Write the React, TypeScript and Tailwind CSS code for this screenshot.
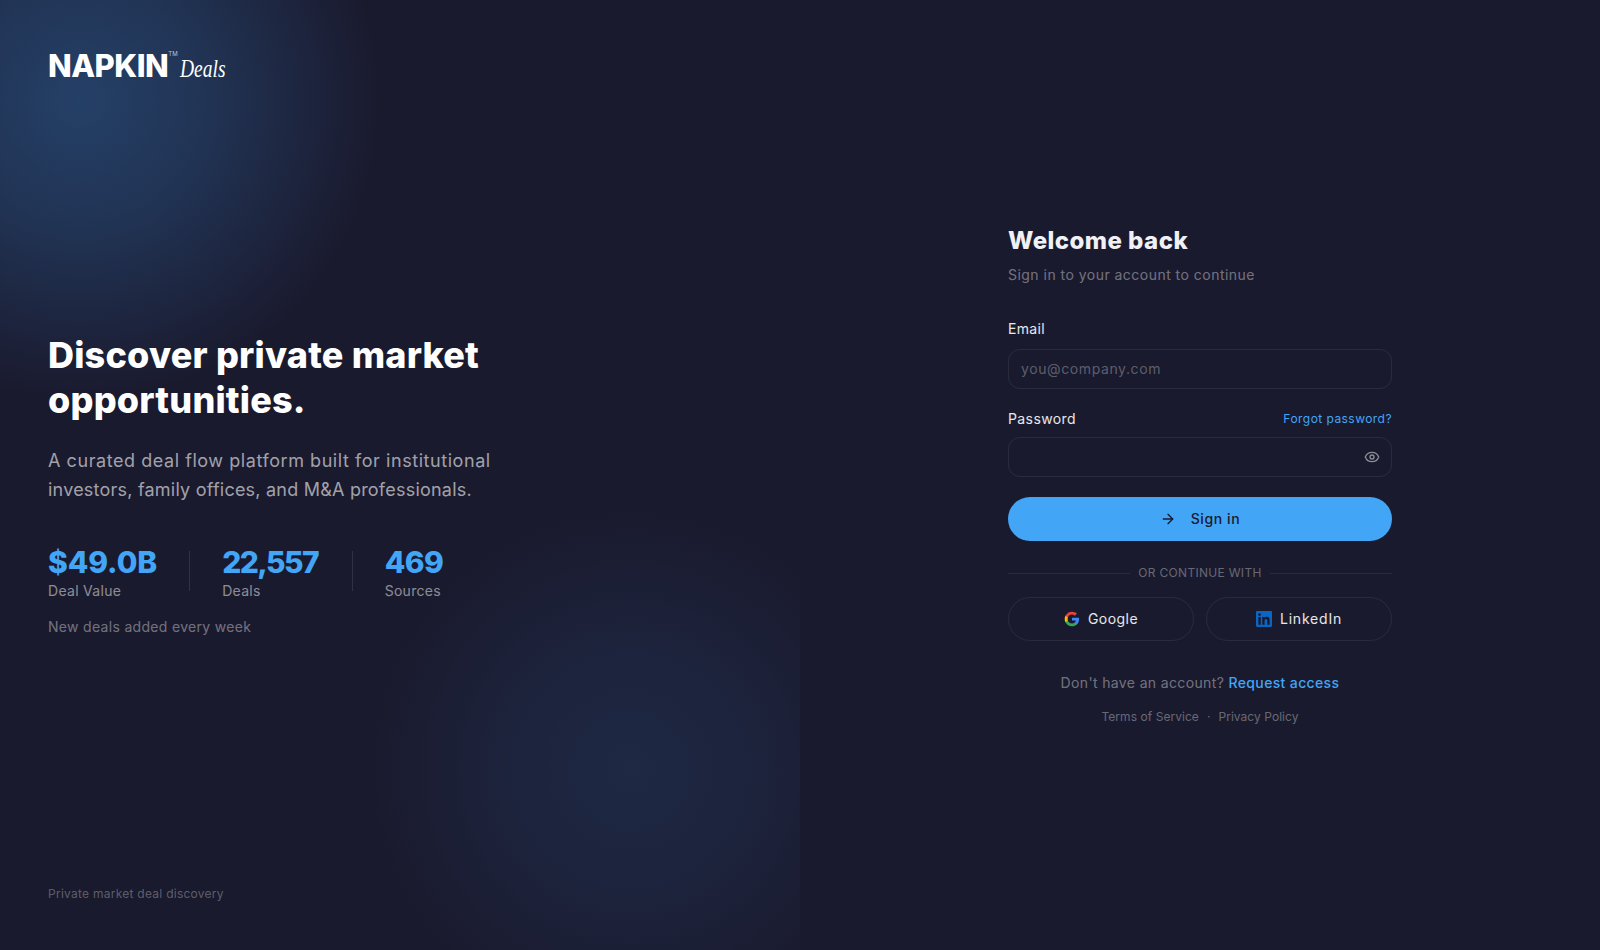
import { Fragment } from "react";
import { ArrowRight, Eye } from "lucide-react";

const font = { fontFamily: "Inter, 'Noto Sans', sans-serif" };

const stats = [
  { value: "$49.0B", label: "Deal Value", track: "tracking-[-0.1px]", box: "" },
  { value: "22,557", label: "Deals", track: "tracking-[-1.6px]", box: "min-w-[97.5px]" },
  { value: "469", label: "Sources", track: "tracking-[-0.6px]", box: "" },
];

function GoogleIcon() {
  return (
    <svg viewBox="0 0 24 24" className="w-4 h-4">
      <path fill="#4285F4" d="M22.56 12.25c0-.78-.07-1.53-.2-2.25H12v4.26h5.92c-.26 1.37-1.04 2.53-2.21 3.31v2.77h3.57c2.08-1.92 3.28-4.74 3.28-8.09z" />
      <path fill="#34A853" d="M12 23c2.97 0 5.46-.98 7.28-2.66l-3.57-2.77c-.98.66-2.23 1.06-3.71 1.06-2.86 0-5.29-1.93-6.16-4.53H2.18v2.84C3.99 20.53 7.7 23 12 23z" />
      <path fill="#FBBC05" d="M5.84 14.09c-.22-.66-.35-1.36-.35-2.09s.13-1.43.35-2.09V7.07H2.18C1.43 8.55 1 10.22 1 12s.43 3.45 1.18 4.93l3.66-2.84z" />
      <path fill="#EA4335" d="M12 5.38c1.62 0 3.06.56 4.21 1.64l3.15-3.15C17.45 2.09 14.97 1 12 1 7.7 1 3.99 3.47 2.18 7.07l3.66 2.84c.87-2.6 3.3-4.53 6.16-4.53z" />
    </svg>
  );
}

function LinkedinIcon() {
  return (
    <svg viewBox="0 0 24 24" className="w-4 h-4">
      <path fill="#0A66C2" d="M20.45 20.45h-3.56v-5.57c0-1.33-.03-3.04-1.85-3.04-1.85 0-2.14 1.45-2.14 2.94v5.67H9.35V9h3.41v1.56h.05c.48-.9 1.64-1.85 3.37-1.85 3.6 0 4.27 2.37 4.27 5.46v6.28zM5.34 7.43a2.06 2.06 0 1 1 0-4.12 2.06 2.06 0 0 1 0 4.12zM7.12 20.45H3.56V9h3.56v11.45zM22.22 0H1.77C.79 0 0 .77 0 1.73v20.54C0 23.23.79 24 1.77 24h20.45c.98 0 1.78-.77 1.78-1.73V1.73C24 .77 23.2 0 22.22 0z" />
    </svg>
  );
}

export default function App() {
  return (
    <div className="flex h-[950px] w-[1600px] overflow-hidden bg-[#1a1a2e] text-white" style={font}>
      <div className="relative flex w-[800px] flex-col justify-between overflow-hidden px-12 pt-[47px] pb-[47px]">
        {/* background glows, clipped by the panel */}
        <div className="pointer-events-none absolute left-[-220px] top-[-200px] h-[600px] w-[600px] rounded-full bg-[radial-gradient(closest-side,rgba(45,95,150,0.55),rgba(45,95,150,0.38)_40%,rgba(45,95,150,0)_100%)]" />
        <div className="pointer-events-none absolute left-[370px] top-[510px] h-[520px] w-[520px] rounded-full bg-[radial-gradient(closest-side,rgba(45,95,150,0.21),rgba(45,95,150,0.13)_50%,rgba(45,95,150,0)_100%)]" />

        <div className="relative flex items-end">
          <span className="text-[31px] leading-[38px] font-extrabold tracking-[-0.5px]">NAPKIN</span>
          <span className="mb-[28px] text-[6px] leading-[6px] text-white/70">TM</span>
          <span className="ml-[2px] origin-left scale-x-[0.75] text-[26px] leading-[32px] italic" style={{ fontFamily: "'Liberation Serif', serif" }}>Deals</span>
        </div>

        <div className="relative mt-[-1px]">
          <h1 className="text-[36px] leading-[45px] font-extrabold tracking-[0.2px]">
            Discover private market
            <br />
            opportunities.
          </h1>
          <p className="mt-[23px] text-[18px] leading-[29px] text-white/60 tracking-[0.56px]">
            A curated deal flow platform built for institutional
            <br />
            <span className="tracking-[0.22px]">investors, family offices, and M&amp;A professionals.</span>
          </p>
          <div className="mt-[40px] flex items-center">
            {stats.map((s, i) => (
              <Fragment key={s.label}>
                {i > 0 && <div className="mx-8 mt-[-3px] h-10 w-px bg-white/10" />}
                <div className={s.box}>
                  <div className={`text-[30px] leading-[36px] font-extrabold text-[#42a5f5] ${s.track}`}>{s.value}</div>
                  <div className="mt-[1px] text-[14px] leading-[20px] text-white/50 tracking-[0.3px]">{s.label}</div>
                </div>
              </Fragment>
            ))}
          </div>
          <p className="mt-[16px] text-[14px] leading-[20px] text-white/40 tracking-[0.31px]">New deals added every week</p>
        </div>

        <p className="relative text-[12px] leading-[18px] text-white/30 tracking-[0.26px]">Private market deal discovery</p>
      </div>

      <div className="flex w-[800px] items-center justify-center">
        <div className="mt-[2px] w-[384px]">
          <h2 className="text-[24px] leading-[32px] font-extrabold text-[#f0f0f5] tracking-[0.45px]">Welcome back</h2>
          <p className="mt-[8px] text-[14px] leading-[20px] text-white/40 tracking-[0.47px]">Sign in to your account to continue</p>

          <label className="mt-[34px] block text-[14px] leading-[20px] font-normal text-white/90 tracking-[0.3px]">Email</label>
          <div className="mt-[10px] flex h-[40px] items-center rounded-xl border border-white/[0.08] px-[12px] text-[14px] text-white/30 tracking-[0.6px]">
            <span className="mb-[2px]">you@company.com</span>
          </div>

          <div className="mt-[20px] flex items-center justify-between">
            <label className="text-[14px] leading-[20px] font-normal text-white/90 tracking-[0.4px]">Password</label>
            <a className="text-[12px] leading-[20px] text-[#42a5f5] tracking-[0.45px]">Forgot password?</a>
          </div>
          <div className="mt-[8px] flex h-[40px] items-center justify-end rounded-xl border border-white/[0.08] pr-[11px] text-white/50">
            <Eye size={16} />
          </div>

          <button className="mt-[20px] flex h-[44px] w-full items-center justify-center gap-[15px] rounded-full bg-[#42a5f5] text-[14px] font-medium text-[#1a1a2e] tracking-[0.6px]">
            <ArrowRight size={16} />
            <span className="mb-[2px]">Sign in</span>
          </button>

          <div className="mt-[22px] flex items-center gap-2">
            <div className="h-px flex-1 bg-white/[0.08]" />
            <span className="text-[12px] leading-[20px] text-white/35 tracking-[0.3px]">OR CONTINUE WITH</span>
            <div className="h-px flex-1 bg-white/[0.08]" />
          </div>

          <div className="mt-[14px] grid grid-cols-2 gap-3">
            <button className="flex h-[44px] items-center justify-center gap-2 rounded-full border border-white/[0.07] text-[14px] font-normal text-white/90 tracking-[0.45px]">
              <GoogleIcon />
              <span className="mb-[2px]">Google</span>
            </button>
            <button className="flex h-[44px] items-center justify-center gap-2 rounded-full border border-white/[0.07] text-[14px] font-normal text-white/90 tracking-[0.8px]">
              <LinkedinIcon />
              <span className="mb-[2px]">LinkedIn</span>
            </button>
          </div>

          <p className="mt-[32px] text-center text-[14px] leading-[20px] text-white/40 tracking-[0.36px]">
            Don't have an account? <a className="font-medium text-[#42a5f5]">Request access</a>
          </p>

          <div className="mt-[14px] flex items-center justify-center gap-2 text-[12px] leading-[20px] text-white/35 tracking-[0.05px]">
            <a>Terms of Service</a>
            <span>·</span>
            <a>Privacy Policy</a>
          </div>
        </div>
      </div>
    </div>
  );
}
